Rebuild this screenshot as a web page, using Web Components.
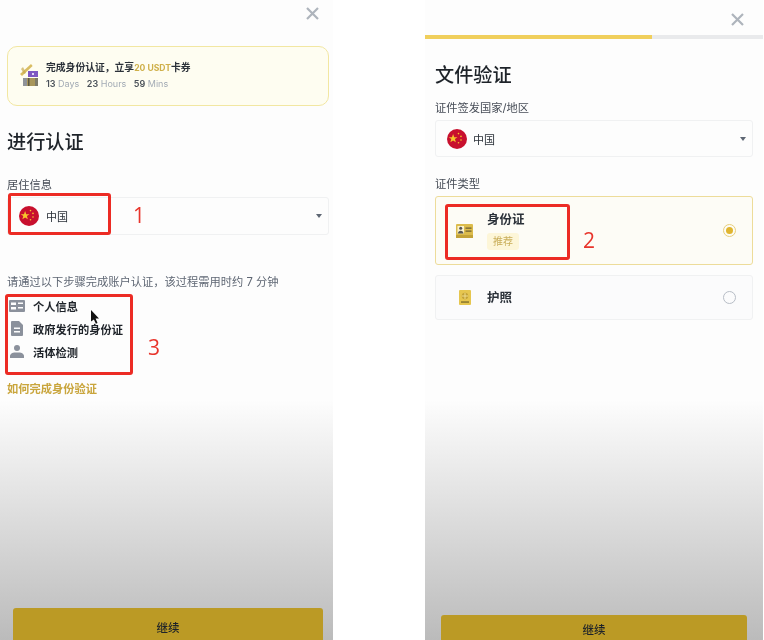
<!DOCTYPE html>
<html lang="zh">
<head>
<meta charset="utf-8">
<style>
    html, body { margin: 0; padding: 0; background: #fff; }
    body {
        font-family: "Inter", "Noto Sans CJK SC", sans-serif;
        color: #1e2329;
        width: 764px;
        height: 640px;
        overflow: hidden;
    }
    .page { display: flex; height: 640px; filter: blur(.35px); }
    .gutter { width: 92px; flex: none; }
</style>
</head>
<body>
<div class="page">
    <kyc-panel style="--panel-width: 333px; --pad-l: 7px; --pad-r: 4px; --btn-left: 13px; --btn-right: 10px; --btn-top: 608px; --btn-line: 40px;">
        <close-x style="--top: 7px; --right: 14px;"></close-x>
        <promo-banner style="margin-top: 46px;"></promo-banner>
        <h-title style="margin-top: 22px;">进行认证</h-title>
        <f-label style="margin-top: 21px;">居住信息</f-label>
        <country-select style="margin-top: 4px; --h: 38px; --gap: 7px;"></country-select>
        <hint-text style="margin-top: 39px;">请通过以下步骤完成账户认证，该过程需用时约 7 分钟</hint-text>
        <step-row icon="card" style="margin-top: 4px;">个人信息</step-row>
        <step-row icon="doc">政府发行的身份证</step-row>
        <step-row icon="person">活体检测</step-row>
        <gold-link style="margin-top: 18px;">如何完成身份验证</gold-link>
        <red-box style="--l: 8px; --t: 193px; --w: 103px; --h: 42px;"></red-box>
        <red-num style="--l: 133px; --t: 201px;">1</red-num>
        <red-box style="--l: 5px; --t: 294px; --w: 128px; --h: 81px;"></red-box>
        <red-num style="--l: 148px; --t: 333px;">3</red-num>
        <cursor-arrow style="--l: 90px; --t: 310px;"></cursor-arrow>
    </kyc-panel>
    <div class="gutter"></div>
    <kyc-panel style="--panel-width: 338px; --pad-l: 10px; --pad-r: 10px; --btn-left: 16px; --btn-right: 16px; --btn-top: 615px; --btn-line: 31px;">
        <close-x style="--top: 13px; --right: 19px;"></close-x>
        <progress-line style="margin: 35px -10px 0;"></progress-line>
        <h-title style="margin-top: 22px;">文件验证</h-title>
        <f-label style="margin-top: 11px;">证件签发国家/地区</f-label>
        <country-select style="margin-top: 4px; --h: 37px;"></country-select>
        <f-label style="margin-top: 19px;">证件类型</f-label>
        <doc-option icon="id" selected style="margin-top: 4px;">身份证<span slot="tag">推荐</span></doc-option>
        <doc-option icon="passport" style="margin-top: 10px;">护照</doc-option>
        <red-box style="--l: 20px; --t: 204px; --w: 125px; --h: 56px;"></red-box>
        <red-num style="--l: 158px; --t: 226px;">2</red-num>
    </kyc-panel>
</div>

<script>
const FLAG = `
<svg width="20" height="20" viewBox="0 0 20 20">
    <circle cx="10" cy="10" r="10" fill="#c8102e"/>
    <polygon points="6,4.6 7.2,8 10.6,8 7.9,10 8.9,13.4 6,11.4 3.1,13.4 4.1,10 1.4,8 4.8,8" fill="#f7c52b" transform="translate(0.4 0.6) scale(.95)"/>
    <circle cx="11.5" cy="4.6" r=".8" fill="#f7c52b"/>
    <circle cx="14" cy="7.4" r=".8" fill="#f7c52b"/>
    <circle cx="14" cy="11" r=".8" fill="#f7c52b"/>
    <circle cx="11.5" cy="13.8" r=".8" fill="#f7c52b"/>
</svg>`;

const STEP_ICONS = {
    card: `<svg width="16" height="12" viewBox="0 0 16 12"><path fill="#8b919c" d="M1 0h14a1 1 0 0 1 1 1v10a1 1 0 0 1-1 1H1a1 1 0 0 1-1-1V1a1 1 0 0 1 1-1z"/><path fill="#fdfdfd" d="M2 2.5h5v2.5H2zM9 2.5h5v1.6H9zM2 7h5v2.6H2zM9 7h5v1.6H9z"/></svg>`,
    doc: `<svg width="12" height="15" viewBox="0 0 12 15"><path fill="#8b919c" d="M1 0h7l4 4v10a1 1 0 0 1-1 1H1a1 1 0 0 1-1-1V1a1 1 0 0 1 1-1z"/><path fill="#fdfdfd" d="M3 6.5h6V8H3zM3 10h6v1.5H3z"/></svg>`,
    person: `<svg width="14" height="13" viewBox="0 0 14 13"><circle cx="7" cy="3" r="3" fill="#8b919c"/><path fill="#8b919c" d="M0 13v-2C0 9 2.4 7.4 5 7.4h4c2.6 0 5 1.6 5 3.6v2z"/></svg>`
};

const DOC_ICONS = {
    id: `<svg width="17" height="14" viewBox="0 0 17 14"><rect width="17" height="14" rx="1" fill="#dcbc4c"/><rect y="11" width="17" height="3" fill="#c3a238"/><rect x="1.5" y="2" width="6.5" height="7.5" fill="#fbf3cd"/><circle cx="4.7" cy="4.2" r="1.5" fill="#555"/><path fill="#555" d="M2 9.4c0-1.8 1.2-2.6 2.7-2.6s2.7.8 2.7 2.6z"/><path fill="#6d5f30" d="M9.5 3.5h6v1.2h-6zM9.5 6.6h6v1.2h-6z"/></svg>`,
    passport: `<svg width="12" height="15" viewBox="0 0 12 15"><rect width="12" height="15" rx="1" fill="#e6c64f"/><circle cx="6" cy="6" r="3.2" fill="#c3a238"/><path fill="#f1dd8a" d="M5.5 3h1v6h-1zM3 5.5h6v1H3z"/><rect x="2" y="11.4" width="8" height="1.3" fill="#7a6a2a"/></svg>`
};

// small helper, every element here is only a template and a shadow root
function defineSimple(name, html) {
    const template = document.createElement('template');
    template.innerHTML = html;
    customElements.define(name, class extends HTMLElement {
        constructor() {
            super();
            this.attachShadow({ mode: 'open' });
            this.shadowRoot.appendChild(template.content.cloneNode(true));
        }
    });
}

defineSimple('kyc-panel', `
<style>
    :host {
        display: flex;
        flex-direction: column;
        position: relative;
        box-sizing: border-box;
        flex: none;
        width: var(--panel-width);
        height: 640px;
        padding: 0 var(--pad-r) 0 var(--pad-l);
        overflow: hidden;
        background: linear-gradient(#fdfdfd 0, #fdfdfd 400px, #bbbbbb 640px);
    }
    .btn {
        position: absolute;
        left: var(--btn-left);
        right: var(--btn-right);
        top: var(--btn-top);
        height: 60px;
        border-radius: 3px 3px 0 0;
        background: #bb9a25;
        color: #1e2329;
        font-size: 11.5px;
        font-weight: 500;
        line-height: var(--btn-line);
        text-align: center;
    }
</style>
<slot></slot>
<div class="btn">继续</div>
`);

defineSimple('close-x', `
<style>
    :host { position: absolute; top: var(--top); right: var(--right); display: block; width: 13px; height: 13px; }
    svg { display: block; }
</style>
<svg width="13" height="13" viewBox="0 0 13 13"><path d="M1 1l11 11M12 1L1 12" stroke="#aeb4bc" stroke-width="2.2" fill="none"/></svg>
`);

defineSimple('promo-banner', `
<style>
    :host {
        display: flex;
        align-items: center;
        gap: 7px;
        box-sizing: border-box;
        height: 60px;
        padding: 0 12px;
        border: 1.5px solid #f2e7a2;
        border-radius: 10px;
        background: #fefdf1;
    }
    svg { flex: none; display: block; margin-top: -2px; }
    .t { font-size: 9.8px; line-height: 14px; font-weight: 700; color: #2b3139; white-space: nowrap; }
    .t b { color: #cfb04a; font-weight: 700; font-size: 8.6px; }
    .c { font-size: 9px; line-height: 14px; color: #a3abb5; white-space: nowrap; margin-top: 2px; }
    .c b { color: #4a5159; font-weight: 600; }
    .c span { margin-right: 5px; }
</style>
<svg width="19" height="24" viewBox="0 0 19 24">
    <path d="M0 11L11 1l1.6 2L2 13z" fill="#d9bd62"/>
    <path d="M3 4l3 6-2 1-3-5z" fill="#c7a94e" opacity=".7"/>
    <rect x="8" y="8" width="10" height="6" fill="#7e57c2"/>
    <rect x="12" y="10" width="2" height="2" fill="#e3d7f5"/>
    <rect x="3" y="15" width="15" height="8" fill="#a8965a"/>
    <rect x="3" y="15" width="4" height="8" fill="#8f9399"/>
    <rect x="8" y="15" width="1.5" height="8" fill="#5b5846"/>
    <rect x="15" y="15" width="3" height="8" fill="#7d7a68"/>
</svg>
<div>
    <div class="t">完成身份认证，立享<b>20 USDT</b>卡券</div>
    <div class="c"><span><b>13</b> Days</span> <span><b>23</b> Hours</span> <span><b>59</b> Mins</span></div>
</div>
`);

defineSimple('h-title', `
<style>:host { display: block; font-size: 19.2px; line-height: 28px; font-weight: 500; color: #1e2329; }</style>
<slot></slot>
`);

defineSimple('f-label', `
<style>:host { display: block; font-size: 11.25px; line-height: 16px; color: #474d57; }</style>
<slot></slot>
`);

defineSimple('hint-text', `
<style>:host { display: block; font-size: 11.25px; line-height: 16px; color: #5e6673; white-space: nowrap; }</style>
<slot></slot>
`);

defineSimple('gold-link', `
<style>:host { display: block; font-size: 11.25px; line-height: 16px; font-weight: 700; color: #c9a53c; }</style>
<slot></slot>
`);

defineSimple('progress-line', `
<style>
    :host { display: block; height: 4px; background: #e9eaec; }
    div { width: 227px; height: 100%; background: #f0cf5c; }
</style>
<div></div>
`);

class CountrySelect extends HTMLElement {
    constructor() {
        super();
        this.attachShadow({ mode: 'open' });
        this.shadowRoot.innerHTML = `
        <style>
            :host {
                display: flex;
                align-items: center;
                gap: var(--gap, 6px);
                box-sizing: border-box;
                height: var(--h);
                padding: 0 6px 0 11px;
                border: 1px solid #f0f1f2;
                border-radius: 3px;
                background: #fdfdfd;
                font-size: 11px;
                color: #2b3139;
            }
            svg { display: block; flex: none; }
            span { flex: 1; }
            i { width: 0; height: 0; border: 3px solid transparent; border-top: 4px solid #5e6673; border-bottom: 0; }
        </style>
        ${FLAG}<span>中国</span><i></i>`;
    }
}
customElements.define('country-select', CountrySelect);

class StepRow extends HTMLElement {
    constructor() {
        super();
        this.attachShadow({ mode: 'open' });
        const icon = STEP_ICONS[this.getAttribute('icon')] || '';
        this.shadowRoot.innerHTML = `
        <style>
            :host {
                display: flex;
                align-items: center;
                height: 23px;
                font-size: 11.25px;
                font-weight: 700;
                color: #1e2329;
            }
            .ic { width: 19px; margin-left: 2px; margin-right: 5px; display: flex; justify-content: center; padding-right: 3px; box-sizing: border-box; }
            svg { display: block; }
        </style>
        <div class="ic">${icon}</div><slot></slot>`;
    }
}
customElements.define('step-row', StepRow);

class DocOption extends HTMLElement {
    constructor() {
        super();
        this.attachShadow({ mode: 'open' });
        const icon = DOC_ICONS[this.getAttribute('icon')] || '';
        const on = this.hasAttribute('selected');
        this.shadowRoot.innerHTML = `
        <style>
            :host {
                display: flex;
                align-items: center;
                box-sizing: border-box;
                height: ${on ? 69 : 45}px;
                padding: 0 16px 0 20px;
                border: 1px solid ${on ? '#eddc9a' : '#f0f1f2'};
                border-radius: 3px;
                background: ${on ? '#fdfcf6' : '#fbfbfc'};
            }
            .ic { width: 17px; margin-right: 14px; display: flex; justify-content: center; }
            svg { display: block; }
            .txt { flex: 1; font-size: 12.5px; line-height: 16px; font-weight: 700; color: #2b3139; }
            ::slotted([slot=tag]) {
                display: inline-block;
                margin-top: 5px;
                padding: 0 6px;
                border-radius: 3px;
                background: #fdf6d8;
                color: #c9ae5a;
                font-size: 10px;
                line-height: 17px;
                font-weight: 400;
            }
            .radio {
                width: 13px; height: 13px; border-radius: 50%;
                box-sizing: border-box;
                border: 1px solid ${on ? '#e8cf7c' : '#b7bdc6'};
                display: flex; align-items: center; justify-content: center;
            }
            .radio::after { content: ""; width: 7px; height: 7px; border-radius: 50%; background: ${on ? '#e0b530' : 'transparent'}; }
        </style>
        <div class="ic">${icon}</div>
        <div class="txt"><slot></slot><div><slot name="tag"></slot></div></div>
        <div class="radio"></div>`;
    }
}
customElements.define('doc-option', DocOption);

defineSimple('red-box', `
<style>
    :host {
        position: absolute;
        left: var(--l); top: var(--t);
        width: var(--w); height: var(--h);
        box-sizing: border-box;
        border: 3px solid #ec2b24;
        border-radius: 3px;
    }
</style>
`);

defineSimple('red-num', `
<style>
    :host {
        position: absolute;
        left: var(--l); top: var(--t);
        font-family: "Open Sans", sans-serif;
        font-size: 21px;
        line-height: 28px;
        color: #e8352c;
    }
</style>
<slot></slot>
`);

defineSimple('cursor-arrow', `
<style>
    :host { position: absolute; left: var(--l); top: var(--t); display: block; width: 10px; height: 14px; }
    svg { display: block; }
</style>
<svg width="10" height="14" viewBox="0 0 10 14"><path d="M1 0l8 8.5H5.6L7.5 13l-1.6.8-2-4.4L1 11.5z" fill="#111"/></svg>
`);
</script>
</body>
</html>
